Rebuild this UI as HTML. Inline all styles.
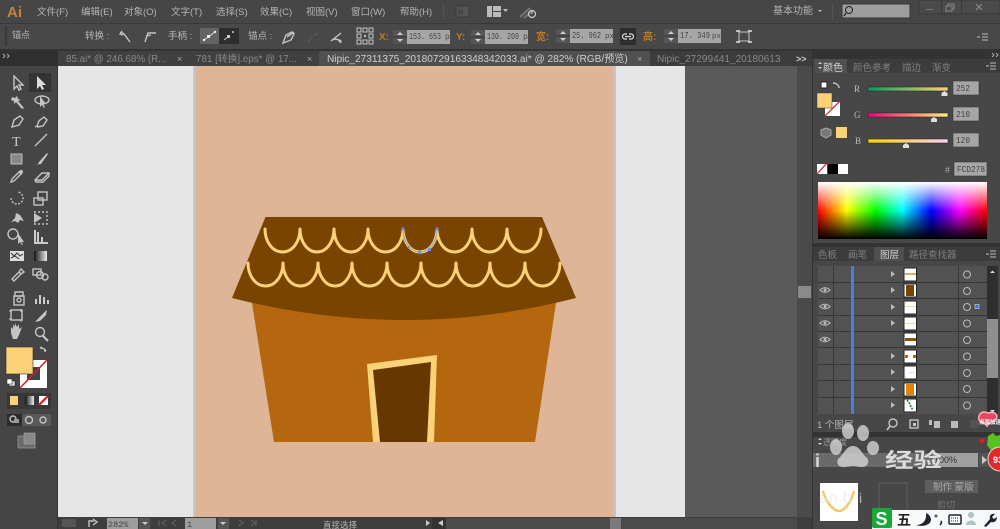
<!DOCTYPE html>
<html><head><meta charset="utf-8">
<style>
html,body{margin:0;padding:0;background:#454545;overflow:hidden}
svg{display:block;filter:blur(.35px)}
text{font-family:"Liberation Sans","Noto Sans CJK SC",sans-serif;fill:#b5b5b5;font-size:9.5px}
.m{font-family:"Liberation Mono","Noto Sans CJK SC",monospace;fill:#444;font-size:9px}
.o{fill:#c07a20;font-size:10px;font-weight:bold}
.t{stroke:#c4c4c4;fill:none;stroke-width:1.4}
.f{fill:#c4c4c4}
</style></head><body>
<svg width="1000" height="529" viewBox="0 0 1000 529" xmlns="http://www.w3.org/2000/svg">
<defs>
<linearGradient id="hue" x1="0" x2="1" y1="0" y2="0">
<stop offset="0" stop-color="#f00"/><stop offset=".17" stop-color="#ff0"/><stop offset=".34" stop-color="#0f0"/><stop offset=".5" stop-color="#0ff"/><stop offset=".67" stop-color="#00f"/><stop offset=".84" stop-color="#f0f"/><stop offset="1" stop-color="#f00"/>
</linearGradient>
<linearGradient id="wh" x1="0" x2="0" y1="0" y2="1">
<stop offset="0" stop-color="#fff"/><stop offset=".5" stop-color="#fff" stop-opacity="0"/><stop offset=".5" stop-color="#000" stop-opacity="0"/><stop offset="1" stop-color="#000"/>
</linearGradient>
<linearGradient id="gr" x1="0" x2="1" y1="0" y2="0"><stop offset="0" stop-color="#0a9a5a"/><stop offset="1" stop-color="#fcd278"/></linearGradient>
<linearGradient id="gg" x1="0" x2="1" y1="0" y2="0"><stop offset="0" stop-color="#fc0078"/><stop offset="1" stop-color="#fcf278"/></linearGradient>
<linearGradient id="gb" x1="0" x2="1" y1="0" y2="0"><stop offset="0" stop-color="#fcd200"/><stop offset="1" stop-color="#fcd2f8"/></linearGradient>
<linearGradient id="bw" x1="0" x2="1" y1="0" y2="0"><stop offset="0" stop-color="#111"/><stop offset="1" stop-color="#eee"/></linearGradient>
</defs>

<!-- base -->
<rect width="1000" height="529" fill="#454545"/>
<rect y="0" width="1000" height="23" fill="#464646"/>
<rect y="23" width="1000" height="1" fill="#383838"/>
<rect y="24" width="1000" height="26" fill="#484848"/>
<rect y="49" width="1000" height="2" fill="#333"/>

<!-- title -->
<text x="7" y="17" style="font-size:15px;font-weight:bold;fill:#c8823c">Ai</text>
<text x="37" y="15">文件(F)</text>
<text x="81" y="15">编辑(E)</text>
<text x="124" y="15">对象(O)</text>
<text x="171" y="15">文字(T)</text>
<text x="216" y="15">选择(S)</text>
<text x="260" y="15">效果(C)</text>
<text x="306" y="15">视图(V)</text>
<text x="351" y="15">窗口(W)</text>
<text x="400" y="15">帮助(H)</text>
<rect x="443" y="3" width="1" height="17" fill="#555"/>
<rect x="456" y="6" width="13" height="11" fill="#555" stroke="#3c3c3c"/>
<text x="458" y="14" style="font-size:6px;fill:#333">Br</text>
<rect x="487" y="6" width="14" height="11" fill="#bbb"/><rect x="492" y="6" width="1" height="11" fill="#444"/><rect x="493" y="11" width="8" height="1" fill="#444"/>
<path d="M503 9h5l-2.500 3z" fill="#bbb"/>
<path d="M520 17l10-9M524 18l8-7" stroke="#777" stroke-width="2" fill="none"/>
<circle cx="532" cy="14" r="3.500" fill="none" stroke="#ccc" stroke-width="1.200"/><path d="M532 10v4" stroke="#ccc"/>
<text x="773" y="14" style="font-size:10px">基本功能</text>
<path d="M818 10h4l-2 2z" fill="#bbb"/>
<rect x="832" y="3" width="1" height="17" fill="#555"/>
<rect x="842" y="4" width="68" height="14" fill="#9d9d9d" stroke="#383838"/>
<circle cx="849" cy="10" r="3.500" fill="none" stroke="#222"/><path d="M846 13l-2 3" stroke="#222" stroke-width="1.300"/>
<rect x="919" y="0" width="81" height="14" fill="#4a4a4a" stroke="#393939"/>
<rect x="941" y="0" width="1" height="14" fill="#393939"/><rect x="961" y="0" width="1" height="14" fill="#393939"/>
<rect x="926" y="9" width="7" height="1" fill="#777"/>
<path d="M946 6h6v5h-6zM948 6v-2h6v5h-2" fill="none" stroke="#888"/>
<path d="M976 4l6 6M982 4l-6 6" stroke="#888" stroke-width="1.200"/>

<!-- control bar -->
<rect x="5" y="26" width="2" height="20" fill="#3a3a3a"/>
<text x="12" y="38" style="font-size:9px">锚点</text>
<text x="85" y="39">转换 :</text>
<path d="M121 32l3 2 6 8M122 31l-2 3 3 1" class="t"/>
<path d="M145 42l3-9h8M146 36l5-1" class="t"/>
<text x="168" y="39">手柄 :</text>
<rect x="200" y="28" width="19" height="16" fill="#636363"/>
<rect x="219" y="28" width="20" height="16" fill="#2e2e2e"/>
<path d="M204 40l11-8" stroke="#ddd"/><rect x="207" y="35" width="3" height="3" fill="#eee"/><circle cx="215" cy="32" r="1.200" fill="#eee"/><circle cx="204" cy="40" r="1.200" fill="#eee"/>
<path d="M224 40l4-3" stroke="#ccc"/><rect x="227" y="35" width="3" height="3" fill="#ccc"/><circle cx="233" cy="32" r="1" fill="#ccc"/>
<text x="248" y="39">锚点 :</text>
<path d="M283 43l3-8 6-3 2 2-3 6z" class="t"/><path d="M287 37l7-5" class="t"/>
<path d="M308 42l4-5M314 36l3-3" stroke="#5a5a5a" stroke-width="1.500"/>
<path d="M331 41l10-8M331 41c3-3 9-2 10 2" class="t"/><circle cx="340" cy="41" r="1.500" class="f"/>
<g fill="none" stroke="#c4c4c4"><rect x="357" y="28" width="4" height="4"/><rect x="363" y="28" width="4" height="4"/><rect x="369" y="28" width="4" height="4"/><rect x="357" y="34" width="4" height="4"/><rect x="369" y="34" width="4" height="4"/><rect x="357" y="40" width="4" height="4"/><rect x="363" y="40" width="4" height="4"/><rect x="369" y="40" width="4" height="4"/></g>
<rect x="364" y="35" width="2" height="2" class="f"/>
<text class="o" x="379" y="40">X:</text>
<rect x="393" y="30" width="14" height="14" fill="#555"/><path d="M397 35l3-3 3 3zM397 39l3 3 3-3z" fill="#ccc"/><rect x="393" y="36.500" width="14" height="1" fill="#333"/>
<rect x="407" y="30" width="43" height="14" fill="#a6a6a6"/>
<text class="m" x="409" y="39" textLength="32" lengthAdjust="spacingAndGlyphs">153. 653</text><text class="m" x="445" y="39" style="font-size:8px">p</text>
<text class="o" x="456" y="40">Y:</text>
<rect x="471" y="30" width="14" height="14" fill="#555"/><path d="M475 35l3-3 3 3zM475 39l3 3 3-3z" fill="#ccc"/><rect x="471" y="36.500" width="14" height="1" fill="#333"/>
<rect x="485" y="30" width="43" height="14" fill="#a6a6a6"/>
<text class="m" x="487" y="39" textLength="32" lengthAdjust="spacingAndGlyphs">130. 209</text><text class="m" x="523" y="39" style="font-size:8px">p</text>
<text class="o" x="536" y="40">宽:</text>
<rect x="556" y="29" width="14" height="14" fill="#555"/><path d="M560 34l3-3 3 3zM560 38l3 3 3-3z" fill="#ccc"/><rect x="556" y="35.500" width="14" height="1" fill="#333"/>
<rect x="570" y="29" width="43" height="14" fill="#a6a6a6"/>
<text class="m" x="572" y="38" textLength="29" lengthAdjust="spacingAndGlyphs">25. 962</text><text class="m" x="605" y="38" style="font-size:7.500px">px</text>
<rect x="620" y="28" width="16" height="17" fill="#2e2e2e"/>
<path d="M627 34h-2a2.500 2.500 0 0 0 0 5h2M629 34h2a2.500 2.500 0 0 1 0 5h-2M625 36.500h6" stroke="#ddd" stroke-width="1.200" fill="none"/>
<text class="o" x="643" y="40">高:</text>
<rect x="664" y="29" width="14" height="14" fill="#555"/><path d="M668 34l3-3 3 3zM668 38l3 3 3-3z" fill="#ccc"/><rect x="664" y="35.500" width="14" height="1" fill="#333"/>
<rect x="678" y="29" width="43" height="14" fill="#a6a6a6"/>
<text class="m" x="680" y="38" textLength="30" lengthAdjust="spacingAndGlyphs">17. 349</text><text class="m" x="712" y="38" style="font-size:7.500px">px</text>
<rect x="739" y="32" width="10" height="9" fill="none" stroke="#c8c8c8"/>
<path d="M736 31h3v-1M752 31h-3v-1M736 42h3v1M752 42h-3v1" stroke="#ddd" fill="none" stroke-width="1.500"/>
<path d="M977 37h3M982 34h6M982 37h6M982 40h6" stroke="#bbb"/>

<!-- tabs -->
<rect y="51" width="1000" height="15" fill="#343434"/>
<rect x="58" y="51" width="132" height="15" fill="#404040"/>
<rect x="190" y="51" width="129" height="15" fill="#404040"/>
<rect x="319" y="51" width="331" height="15" fill="#505050"/>
<rect x="650" y="51" width="162" height="15" fill="#3c3c3c"/>
<text x="66" y="62" style="font-size:9.800px;fill:#888">85.ai* @ 246.68% (R...</text>
<text x="177" y="62" style="fill:#aaa;font-size:9px">×</text>
<text x="196" y="62" style="font-size:9.800px;fill:#888">781 [转换].eps* @ 17...</text>
<text x="307" y="62" style="fill:#aaa;font-size:9px">×</text>
<text x="327" y="62" style="font-size:10.100px;fill:#cfcfcf">Nipic_27311375_20180729163348342033.ai* @ 282% (RGB/预览)</text>
<text x="637" y="62" style="fill:#aaa;font-size:9px">×</text>
<text x="657" y="62" style="font-size:10.100px;fill:#888">Nipic_27299441_20180613</text>
<text x="796" y="62" style="fill:#ccc;font-size:9px;font-weight:bold">&gt;&gt;</text>

<!-- workspace -->
<rect x="58" y="66" width="754" height="451" fill="#5a5a5a"/>
<rect x="58" y="66" width="627" height="451" fill="#e6e6e6"/>
<rect x="193" y="66" width="2" height="451" fill="#c8c8c8"/>
<rect x="613" y="66" width="3" height="451" fill="#c4c4c4"/>
<rect x="195" y="66" width="418" height="451" fill="#deb596"/>

<!-- house -->
<path d="M252 303H556L535 442H274Z" fill="#b4670f"/>
<path d="M265.500 217H542L576 298Q404 342 232 298Z" fill="#794400"/>
<path d="M367 364L437 355L434 442H373Z" fill="#fcd278"/>
<path d="M373 370L431 362L427 442H380Z" fill="#663800"/>
<g fill="none" stroke="#fcd278" stroke-width="3" stroke-linecap="round" stroke-linejoin="round">
<path d="M265 229C265 241 272 252 282.500 252C293 252 300 241 300 229C300 241 307 252 317 252C327 252 334 241 334 229C334 241 341 252 351 252C361 252 368 241 368 229C368 241 375 252 385.500 252C396 252 403 241 403 229C403 241 410 252 420 252C430 252 437 241 437 229C437 241 444 252 454.500 252C465 252 472 241 472 229C472 241 479 252 489.500 252C500 252 507 241 507 229C507 241 514 252 524 252C534 252 541 241 541 229"/>
<path d="M248 263C248 275 255 286 265.500 286C276 286 283 275 283 263C283 275 290 286 300.500 286C311 286 318 275 318 263C318 275 325 286 335 286C345 286 352 275 352 263C352 275 359 286 369.500 286C380 286 387 275 387 263C387 275 394 286 404 286C414 286 421 275 421 263C421 275 428 286 438.500 286C449 286 456 275 456 263C456 275 463 286 473 286C483 286 490 275 490 263C490 275 497 286 507.500 286C518 286 525 275 525 263C525 275 532 286 542.500 286C553 286 560 275 560 263"/>
</g>
<path d="M403 229C403 241 410 252 420 252C430 252 437 241 437 229" fill="none" stroke="#7f9fd8" stroke-width="1"/>
<g fill="#6f92d8"><rect x="401.500" y="227.500" width="3" height="3"/><rect x="435.500" y="227.500" width="3" height="3"/><rect x="418" y="251" width="3" height="3"/><rect x="428" y="248" width="3" height="3"/><rect x="408" y="246" width="2" height="2"/></g>

<!-- canvas scrollbar -->
<rect x="797" y="66" width="15" height="451" fill="#4a4a4a"/>
<rect x="798" y="286" width="13" height="12" fill="#8a8a8a"/>

<!-- left tools -->
<rect x="0" y="51" width="58" height="15" fill="#2f2f2f"/>
<path d="M3 54l2 2-2 2M7 54l2 2-2 2" stroke="#aaa" fill="none"/>
<rect x="0" y="66" width="58" height="463" fill="#454545"/>
<rect x="57" y="66" width="1" height="463" fill="#333"/>
<rect x="29" y="73" width="22" height="19" fill="#343434"/>
<path d="M14 76v13l3-3 2 4 2-1-2-4h4z" class="t"/>
<path d="M37 76v13l3-3 2 4 2-1-2-4h4z" fill="#ddd"/>
<path d="M12 97l3 1 2-2 1 3 3 1-3 1 6 7-2 1-6-7-2 2v-3l-3-1z" class="f"/>
<ellipse cx="42" cy="100" rx="7" ry="4" class="t"/><path d="M40 96v11l2-2 2 3 1-1-2-3h3z" class="f"/>
<path d="M12 127l2-7 6-4 3 3-4 6z" class="t" fill="#aaa"/><path d="M35 127c4-1 2-5 5-7l4-3 3 3-4 6-6 1" class="t"/>
<text x="12" y="146" style="font-size:14px;font-family:'Liberation Serif',serif;fill:#ccc">T</text>
<path d="M35 146l12-12" class="t"/>
<rect x="11" y="154" width="11" height="10" fill="#888" stroke="#bbb"/>
<path d="M34 165c3 0 4-1 5-3l8-9 1 1-7 10z" class="f"/>
<path d="M11 182l1-3 7-7 2 2-7 7z" class="t"/><circle cx="21" cy="172" r="2" class="f"/>
<path d="M35 180l7-7h7v3l-6 6h-7z" class="t"/><path d="M35 180h7l7-7" class="t"/>
<path d="M11 198a6 6 0 1 0 6-6" class="t" stroke-dasharray="2 1.500"/>
<rect x="38" y="192" width="9" height="8" class="t"/><rect x="34" y="198" width="9" height="7" class="t"/>
<path d="M11 222l4-4 1-5 4 2 2 3 2 3-4-1-2 3-3-2z" class="f"/>
<path d="M34 212h13v12H34" class="t" stroke-dasharray="2 2"/><path d="M34 213l8 5-8 5z" class="f"/>
<circle cx="13" cy="234" r="5" class="t"/><path d="M18 233v11l2-2 2 3 1-1-2-2h3z" class="f"/>
<path d="M35 230v13h13M38 232v11M42 237v6" stroke="#ccc" stroke-width="2" fill="none"/>
<rect x="10" y="251" width="14" height="10" fill="#ddd"/><path d="M11 253l3 3 3-3 3 3 3-2M11 258l4-2 4 3" stroke="#333" fill="none"/>
<rect x="34" y="251" width="13" height="10" fill="url(#bw)"/>
<path d="M12 279l7-7 2 2-7 7zM19 272l2-3 3 3-3 2z" class="t"/>
<rect x="33" y="269" width="8" height="6" class="t"/><circle cx="40" cy="275" r="3.500" class="t"/><circle cx="45" cy="277" r="3" class="t"/>
<path d="M15 292h8v4h-8z" class="t"/><rect x="14" y="296" width="10" height="9" class="t"/><circle cx="19" cy="300" r="2" class="t"/>
<path d="M36 304v-5M40 304v-9M44 304v-7M48 304v-4" stroke="#ccc" stroke-width="2"/>
<rect x="11" y="310" width="11" height="10" class="t"/><path d="M9 311h3M21 309v3M9 319h3M21 319v3" stroke="#ccc"/>
<path d="M35 322c3-3 8-9 12-12l-1 5-6 6z" class="f"/>
<path d="M11 333v-6l2 2v-5l2 3v-4l2 4 2-3v5l3-2-3 8-2 4h-4z" class="f"/>
<circle cx="40" cy="332" r="4.500" class="t"/><path d="M43 336l5 5" stroke="#ccc" stroke-width="2"/>

<!-- fill/stroke -->
<path d="M40 348c3 0 5 1 6 3M46 351h-2M40 348l2-1" class="t" stroke-width="1"/>
<rect x="20" y="360" width="27" height="28" fill="#fff"/>
<rect x="27" y="367" width="13" height="13" fill="#444"/>
<path d="M20 388L47 360" stroke="#d11a2a" stroke-width="1.500"/>
<rect x="6" y="347" width="27" height="27" fill="#fcd278" stroke="#2e2e2e" stroke-width=".6"/>
<rect x="9" y="381" width="6" height="5" fill="#ddd" stroke="#222" stroke-width=".5"/><rect x="7" y="379" width="5" height="5" fill="#fff" stroke="#222" stroke-width=".5"/>
<rect x="7" y="393" width="44" height="16" fill="#383838"/>
<rect x="10" y="396" width="8" height="9" fill="#fcd278"/>
<rect x="25" y="396" width="9" height="9" fill="url(#bw)"/>
<rect x="39" y="396" width="9" height="9" fill="#fff"/><path d="M39 405l9-9" stroke="#e01020" stroke-width="2"/>
<rect x="7" y="414" width="15" height="12" fill="#2c2c2c"/><rect x="22" y="414" width="29" height="12" fill="#595959"/>
<circle cx="13" cy="419" r="3" class="t"/><rect x="14" y="419" width="5" height="4" fill="#999"/>
<circle cx="29" cy="420" r="3.500" class="t"/><circle cx="43" cy="420" r="3" class="t"/>
<rect x="18" y="436" width="17" height="12" fill="#6a6a6a" stroke="#aaa" stroke-width=".6"/>
<rect x="24" y="433" width="11" height="11" fill="#888" stroke="#aaa" stroke-width=".6"/>

<!-- status bar -->
<rect x="58" y="517" width="754" height="12" fill="#3e3e3e"/>
<rect x="62" y="519" width="14" height="8" fill="#555"/>
<path d="M89 527v-6h5M93 519l4 3-4 3" class="t" stroke-width="1"/>
<rect x="107" y="518" width="31" height="11" fill="#9d9d9d"/>
<text class="m" x="108" y="527" style="font-size:8.500px">282%</text>
<rect x="139" y="518" width="11" height="11" fill="#555"/><path d="M142 522h6l-3 3z" fill="#ccc"/>
<path d="M159 520v6M166 520l-4 3 4 3M176 520l-4 3 4 3" stroke="#666" fill="none"/>
<rect x="185" y="518" width="31" height="11" fill="#9d9d9d"/>
<text class="m" x="187" y="527" style="font-size:8.500px">1</text>
<rect x="218" y="518" width="11" height="11" fill="#555"/><path d="M220 522h6l-3 3z" fill="#ccc"/>
<path d="M239 520l4 3-4 3M251 520l4 3-4 3M256 520v6" stroke="#666" fill="none"/>
<text x="323" y="528" style="font-size:8.500px">直接选择</text>
<path d="M426 520l4 3-4 3z" fill="#ccc"/>
<rect x="432" y="518" width="14" height="11" fill="#333"/>
<path d="M443 520l-5 3 5 3z" fill="#ccc"/>
<rect x="446" y="518" width="351" height="11" fill="#4b4b4b"/>
<rect x="610" y="518" width="11" height="11" fill="#7a7a7a"/>

<!-- right panel -->
<rect x="812" y="51" width="188" height="478" fill="#474747"/>
<rect x="812" y="51" width="1" height="478" fill="#333"/>
<rect x="812" y="51" width="188" height="8" fill="#333"/>
<path d="M992 53l2 2-2 2M996 53l2 2-2 2" stroke="#aaa" fill="none"/>
<rect x="815" y="59" width="32" height="14" fill="#4f4f4f"/>
<rect x="847" y="59" width="153" height="14" fill="#3c3c3c"/>
<path d="M818 64l2-2 2 2zM818 67l2 2 2-2z" fill="#ccc"/>
<text x="823" y="71" style="font-size:10px;fill:#d2d2d2">颜色</text>
<text x="853" y="71" style="font-size:9.500px;fill:#808080">颜色参考</text>
<text x="902" y="71" style="font-size:9.500px;fill:#808080">描边</text>
<text x="932" y="71" style="font-size:9.500px;fill:#808080">渐变</text>
<path d="M986 66h3M990 63h6M990 66h6M990 69h6" stroke="#bbb"/>

<rect x="821" y="82" width="6" height="6" fill="#fff" stroke="#222"/>
<path d="M833 83c3 0 6 2 6 5" class="t" stroke-width="1"/>
<rect x="825" y="102" width="15" height="14" fill="#fff"/>
<path d="M825 116l15-15" stroke="#d11a2a" stroke-width="1.200"/>
<rect x="817" y="93" width="15" height="15" fill="#fcd278" stroke="#3a3a3a" stroke-width=".5"/>
<path d="M826 128l5 2v5l-5 3-5-3v-5z" fill="#777" stroke="#aaa"/>
<rect x="836" y="127" width="11" height="11" fill="#fcd278"/>

<text x="854" y="92" style="font-size:9px;font-family:'Liberation Serif',serif;fill:#bbb">R</text>
<text x="854" y="118" style="font-size:9px;font-family:'Liberation Serif',serif;fill:#bbb">G</text>
<text x="855" y="144" style="font-size:9px;font-family:'Liberation Serif',serif;fill:#bbb">B</text>
<rect x="868" y="87" width="80" height="4" fill="url(#gr)" stroke="#2a2a2a" stroke-width=".6"/>
<rect x="868" y="113" width="80" height="4" fill="url(#gg)" stroke="#2a2a2a" stroke-width=".6"/>
<rect x="868" y="139" width="80" height="4" fill="url(#gb)" stroke="#2a2a2a" stroke-width=".6"/>
<path d="M944.500 91l3 2v3h-6v-3z" fill="#ddd"/>
<path d="M934 117l3 2v3h-6v-3z" fill="#ddd"/>
<path d="M906 143l3 2v3h-6v-3z" fill="#ddd"/>
<rect x="953" y="81" width="26" height="14" fill="#a6a6a6" stroke="#3a3a3a" stroke-width=".6"/>
<rect x="953" y="107" width="26" height="14" fill="#a6a6a6" stroke="#3a3a3a" stroke-width=".6"/>
<rect x="953" y="133" width="26" height="14" fill="#a6a6a6" stroke="#3a3a3a" stroke-width=".6"/>
<text class="m" x="956" y="91" style="font-size:9.500px" textLength="14" lengthAdjust="spacingAndGlyphs">252</text>
<text class="m" x="956" y="117" style="font-size:9.500px" textLength="14" lengthAdjust="spacingAndGlyphs">210</text>
<text class="m" x="956" y="143" style="font-size:9.500px" textLength="14" lengthAdjust="spacingAndGlyphs">120</text>

<rect x="817" y="164" width="10" height="10" fill="#fff"/><path d="M817 174l10-11" stroke="#d11a2a" stroke-width="1.200"/>
<rect x="828" y="164" width="10" height="10" fill="#000"/>
<rect x="838" y="164" width="10" height="10" fill="#fff"/>
<text x="945" y="173" style="font-size:9px;fill:#aaa">#</text>
<rect x="954" y="162" width="33" height="14" fill="#a6a6a6" stroke="#3a3a3a" stroke-width=".6"/>
<text class="m" x="957" y="172" style="font-size:9.500px" textLength="28" lengthAdjust="spacingAndGlyphs">FCD278</text>
<rect x="818" y="182" width="169" height="57" fill="url(#hue)"/>
<rect x="818" y="182" width="169" height="57" fill="url(#wh)"/>

<!-- layers -->
<rect x="812" y="243" width="188" height="4" fill="#333"/>
<rect x="813" y="247" width="187" height="14" fill="#3c3c3c"/>
<rect x="874" y="247" width="30" height="14" fill="#4f4f4f"/>
<text x="818" y="258" style="font-size:9.500px;fill:#808080">色板</text>
<text x="848" y="258" style="font-size:9.500px;fill:#808080">画笔</text>
<text x="880" y="258" style="font-size:9.500px;fill:#d2d2d2">图层</text>
<text x="909" y="258" style="font-size:9.500px;fill:#808080">路径查找器</text>
<path d="M986 254h3M990 251h6M990 254h6M990 257h6" stroke="#bbb"/>
<rect x="818" y="266" width="169" height="148" fill="#525252"/>
<g fill="#373737">
<rect x="818" y="282" width="169" height="1"/><rect x="818" y="298" width="169" height="1"/><rect x="818" y="315" width="169" height="1"/><rect x="818" y="331" width="169" height="1"/><rect x="818" y="347" width="169" height="1"/><rect x="818" y="364" width="169" height="1"/><rect x="818" y="380" width="169" height="1"/><rect x="818" y="397" width="169" height="1"/>
<rect x="833" y="266" width="1" height="148"/><rect x="958" y="266" width="1" height="148"/>
</g>
<rect x="851" y="266" width="3" height="148" fill="#4a7fd8"/>
<g fill="#bbb">
<path d="M891 271v6l4-3z"/><path d="M891 287v6l4-3z"/><path d="M891 304v6l4-3z"/><path d="M891 320v6l4-3z"/><path d="M891 353v6l4-3z"/><path d="M891 369v6l4-3z"/><path d="M891 386v6l4-3z"/><path d="M891 402v6l4-3z"/>
</g>
<g fill="#fff" stroke="#222" stroke-width="1">
<rect x="904" y="268" width="12.500" height="13"/><rect x="904" y="284" width="12.500" height="13"/><rect x="904" y="301" width="12.500" height="13"/><rect x="904" y="317" width="12.500" height="13"/><rect x="904" y="333" width="12.500" height="13"/><rect x="904" y="350" width="12.500" height="13"/><rect x="904" y="366" width="12.500" height="13"/><rect x="904" y="383" width="12.500" height="13"/><rect x="904" y="399" width="12.500" height="13"/>
</g>
<rect x="905" y="273" width="11" height="2" fill="#d8b060"/>
<rect x="906" y="285" width="8" height="11" fill="#7a4500"/>
<rect x="905" y="306" width="11" height="1" fill="#f0dca8"/>
<rect x="905" y="323" width="11" height="1" fill="#f0dca8"/>
<rect x="905" y="338" width="11" height="3" fill="#8a5210"/>
<rect x="905" y="355" width="3" height="3" fill="#b4670f"/><rect x="913" y="355" width="3" height="3" fill="#b4670f"/>
<rect x="909" y="372" width="5" height="1" fill="#f0dca8"/>
<rect x="906" y="384" width="8" height="11" fill="#e0820c"/>
<path d="M907 400l3 4 1 3 2 3" stroke="#2f8a50" stroke-width="1.800" fill="none" stroke-dasharray="2 1"/>
<g fill="none" stroke="#bbb" stroke-width="1.100">
<path d="M820 290c3-3 7-3 10 0c-3 3-7 3-10 0z"/><path d="M820 306.500c3-3 7-3 10 0c-3 3-7 3-10 0z"/><path d="M820 323c3-3 7-3 10 0c-3 3-7 3-10 0z"/><path d="M820 339.500c3-3 7-3 10 0c-3 3-7 3-10 0z"/>
</g>
<g fill="#bbb"><circle cx="825" cy="290" r="1.500"/><circle cx="825" cy="306.500" r="1.500"/><circle cx="825" cy="323" r="1.500"/><circle cx="825" cy="339.500" r="1.500"/></g>
<g fill="none" stroke="#bbb"><circle cx="967" cy="274.500" r="3.500"/><circle cx="967" cy="291" r="3.500"/><circle cx="967" cy="307" r="3.500"/><circle cx="967" cy="323.500" r="3.500"/><circle cx="967" cy="340" r="3.500"/><circle cx="967" cy="356.500" r="3.500"/><circle cx="967" cy="373" r="3.500"/><circle cx="967" cy="389" r="3.500"/><circle cx="967" cy="405.500" r="3.500"/></g>
<rect x="975" y="304.500" width="4" height="4" fill="#3f6fe0" stroke="#ddd" stroke-width=".6"/>
<rect x="987" y="266" width="11" height="148" fill="#2f2f2f"/>
<rect x="987" y="319" width="11" height="59" fill="#8f8f8f"/>
<path d="M990 273l2.500-2.500 2.500 2.500z" fill="#ddd"/><path d="M990 410l2.500 2.500 2.500-2.500z" fill="#ddd"/>

<text x="817" y="428" style="font-size:9.500px">1 个图层</text>
<circle cx="893" cy="423" r="4" class="t"/><path d="M890 426l-3 4" stroke="#ccc" stroke-width="1.500"/>
<rect x="910" y="420" width="8" height="8" class="t"/><rect x="913" y="423" width="3" height="3" class="f"/>
<path d="M929 420h3v5h-3M934 421h6v7h-6z" fill="#bbb"/>
<path d="M951 421h7v7h-7z" fill="#bbb"/>
<rect x="970" y="420" width="8" height="8" fill="#555"/>
<path d="M980 414c3-3 5-2 8-1 3-1 6-1 8 1 2 3 0 6-2 7-4 2-6 3-7 5-1-2-3-3-6-4-3-2-3-5-1-8z" fill="#e84b60" stroke="#f4b0bb" stroke-width="1.500"/>
<text x="979" y="424" style="font-size:5.500px;fill:#fff;font-weight:bold">点我加速</text>

<!-- bottom panel -->
<rect x="812" y="432" width="188" height="5" fill="#333"/>
<path d="M818 440l2-2 2 2zM818 443l2 2 2-2z" fill="#ccc"/>
<text x="823" y="445" style="font-size:8px;fill:#999">透明度</text>
<rect x="813" y="453" width="165" height="14" fill="#6a6a6a"/>
<rect x="933" y="453" width="45" height="14" fill="#a0a0a0"/>
<text x="934" y="463" style="font-size:9px;fill:#333">100%</text>
<rect x="979" y="453" width="11" height="14" fill="#555"/>
<path d="M982 456l5 4-5 4z" fill="#ccc"/>
<rect x="820" y="483" width="38" height="38" fill="#fff"/>
<path d="M823 491c3 12 11 20 16 20s12-8 15-20" fill="none" stroke="#f4c860" stroke-width="2.500"/>
<rect x="879" y="483" width="28" height="28" fill="none" stroke="#5e5e5e"/>
<rect x="925" y="480" width="53" height="13" fill="#5e5e5e"/>
<text x="933" y="490" style="font-size:9.500px;fill:#aaa">制作 蒙版</text>
<text x="937" y="508" style="font-size:9px;fill:#777">剪切</text>

<!-- baidu watermark -->
<g fill="#d8d8d8" opacity=".78">
<ellipse cx="848" cy="431" rx="6" ry="8"/><ellipse cx="863" cy="433" rx="6" ry="8"/>
<ellipse cx="836" cy="447" rx="6" ry="8"/><ellipse cx="873" cy="448" rx="6" ry="7"/>
<path d="M853 446c7 0 9 8 14 12 3 3 1 9-5 9-4 0-5-1-9-1s-6 1-10 1c-6 0-7-6-4-9 5-4 7-12 14-12z"/>
</g>
<text x="815" y="467" style="font-size:18px;fill:#d8d8d8;font-weight:bold">i</text>
<text x="885" y="467" style="font-size:20px;fill:#dcdcdc;font-weight:bold" textLength="57" lengthAdjust="spacingAndGlyphs">经验</text>
<text x="819" y="503" style="font-size:17px;fill:#e4e4e4;opacity:.6">an.b</text>
<text x="859" y="503" style="font-size:14px;fill:#e4e4e4;opacity:.7">i</text>

<!-- green/red badge -->
<path d="M988 436l5-3 3 3 4-1v17h-8l-5-7z" fill="#58c020"/>
<circle cx="982" cy="441" r="2.500" fill="#d8202a" />
<circle cx="1000" cy="459" r="12" fill="#dd2a2a" stroke="#f5d0d0"/>
<text x="993" y="463" style="font-size:9px;fill:#fff;font-weight:bold">93</text>

<!-- sogou IME -->
<rect x="872" y="510" width="128" height="19" fill="#f8f9fa"/>
<rect x="872" y="508" width="20" height="20" rx="2" fill="#18a838"/>
<text x="875.500" y="525" style="font-size:18px;font-weight:bold;fill:#fff">S</text>
<text x="897" y="525" style="font-size:14px;fill:#222;font-weight:bold">五</text>
<path d="M926 513c1 8-4 12-10 12 5 2 14 1 15-5 0-3-2-6-5-7z" fill="#223"/>
<circle cx="936" cy="516" r="1.500" fill="#556"/><path d="M941 521c1 1 0 3-1 4" stroke="#223" stroke-width="1.600" fill="none"/>
<rect x="949" y="515" width="12" height="9" rx="1" fill="none" stroke="#223" stroke-width="1.500"/><path d="M951 518h8M951 521h8" stroke="#223" stroke-dasharray="1 1"/>
<circle cx="971" cy="515" r="3" fill="#a8c4c4"/><path d="M966 525c0-6 10-6 10 0z" fill="#a8c4c4"/>
<path d="M984 526l6-7c-1-3 1-6 5-5l-3 3 2 2 3-2c0 4-3 6-6 5l-5 5z" fill="#223"/>
</svg>
</body></html>
